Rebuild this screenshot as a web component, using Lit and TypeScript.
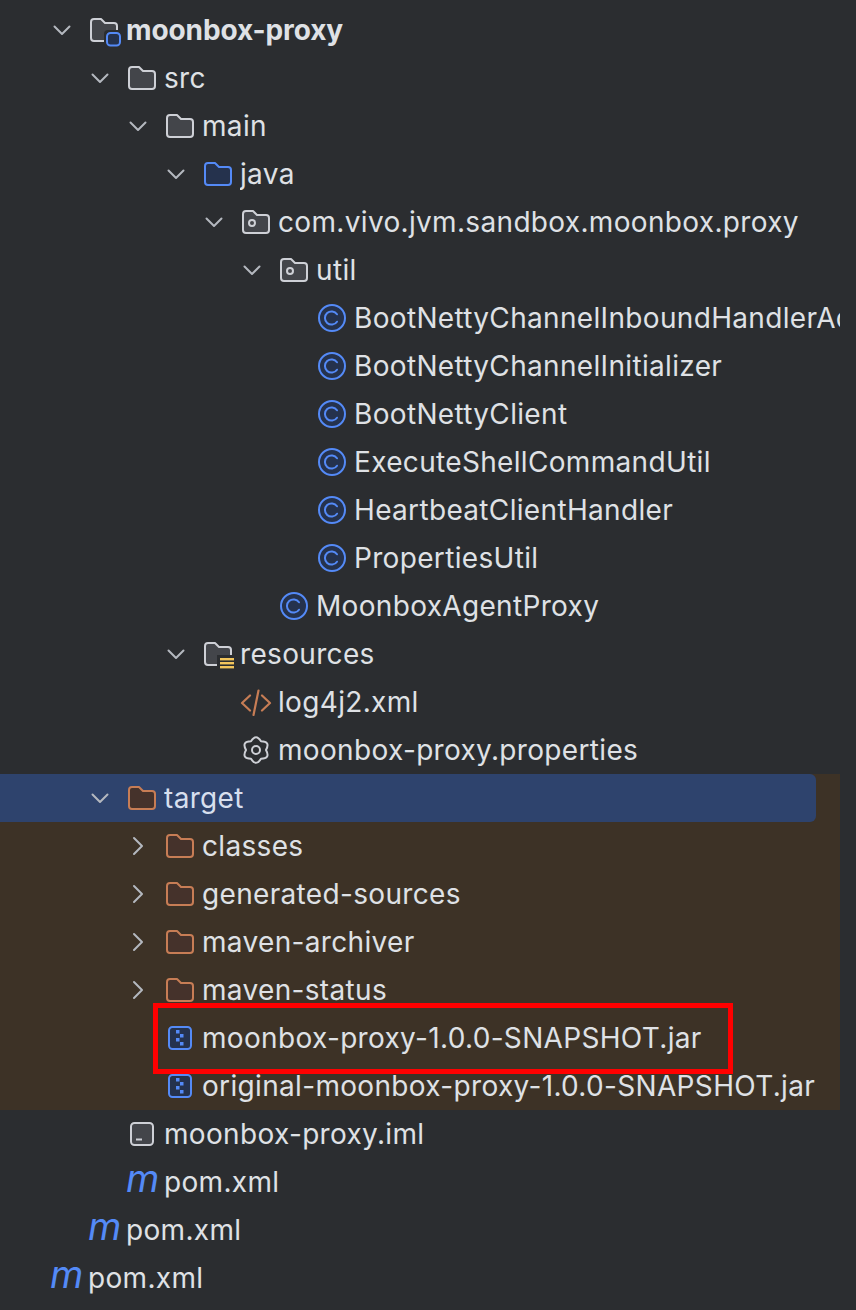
import { LitElement, html, css, svg, nothing } from "lit";
import { customElement } from "lit/decorators.js";

type Exp = "open" | "closed" | "";
interface Row { d: number; t: string; i: string; x: Exp; bold?: boolean; sel?: boolean; boxed?: boolean; }

const F = "M1 6a3 3 0 0 1 3-3h7l4 4h9a3 3 0 0 1 3 3v12a3 3 0 0 1-3 3H4a3 3 0 0 1-3-3z";
const folder = (fill: string, stroke: string, extra: unknown = nothing) => html`<svg viewBox="0 0 28 28" width="28" height="28"><path d=${F} fill=${fill} stroke=${stroke} stroke-width="2" stroke-linejoin="round"/>${extra}</svg>`;

const ICONS: Record<string, () => unknown> = {
  folder: () => folder("#43454a", "#ced0d6"),
  java: () => folder("#25324d", "#548af7"),
  target: () => folder("#45322b", "#c77d55"),
  pkg: () => folder("#43454a", "#ced0d6", svg`<circle cx="10" cy="15" r="3" fill="none" stroke="#ced0d6" stroke-width="2"/>`),
  module: () => folder("#43454a", "#ced0d6", svg`<rect x="14" y="14" width="18" height="18" rx="4" fill="#2b2d30"/><rect x="17" y="17" width="13" height="12.5" rx="3.5" fill="#25324d" stroke="#548af7" stroke-width="2"/>`),
  res: () => folder("#43454a", "#ced0d6", svg`<rect x="13" y="15" width="19" height="15" fill="#2b2d30"/><g fill="#f2c55c"><rect x="16" y="18" width="14" height="2.4"/><rect x="16" y="22" width="14" height="2.4"/><rect x="16" y="26" width="14" height="2.4"/></g>`),
  cls: () => html`<svg viewBox="0 0 28 28" width="28" height="28"><circle cx="14" cy="14" r="13" fill="#25324d" stroke="#548af7" stroke-width="2"/><path d="M19 10.3a6.6 6.6 0 1 0 0 7.4" fill="none" stroke="#548af7" stroke-width="2" stroke-linecap="round"/></svg>`,
  xml: () => html`<svg viewBox="0 0 32 28" width="32" height="28" class="wide"><path d="M10 7.500 2 15l8 7.500M22 7.500 30 15l-8 7.500M18.500 2.500 13.500 27" fill="none" stroke="#c77d55" stroke-width="2.200" stroke-linecap="round" stroke-linejoin="round"/></svg>`,
  gear: () => html`<svg viewBox="0 0 28 28" width="28" height="28"><path d="M9 5.340Q14-3 19 5.340 28.700 5.500 24 14 28.700 22.500 19 22.660 14 31 9 22.660-.7 22.500 4 14-.7 5.500 9 5.340z" fill="none" stroke="#ced0d6" stroke-width="2" stroke-linejoin="round"/><circle cx="14" cy="14" r="4" fill="none" stroke="#ced0d6" stroke-width="2"/></svg>`,
  jar: () => html`<svg viewBox="0 0 28 28" width="28" height="28"><rect x="3" y="3" width="22" height="22" rx="3.500" fill="#25324d" stroke="#548af7" stroke-width="2"/><g fill="#548af7"><rect x="10" y="6" width="3.500" height="3.500"/><rect x="14" y="10" width="3.500" height="3.500"/><rect x="10" y="14" width="3.500" height="3.500"/><rect x="14" y="18" width="3.500" height="3.500"/></g></svg>`,
  iml: () => html`<svg viewBox="0 0 28 28" width="28" height="28"><rect x="3" y="3" width="22" height="22" rx="3.500" fill="#43454a" stroke="#ced0d6" stroke-width="2"/><rect x="8" y="18.500" width="6" height="2" fill="#ced0d6"/></svg>`,
  m: () => html`<span class="m">m</span>`,
};

const ROWS: Row[] = [
  { d: 1, t: "moonbox-proxy", i: "module", x: "open", bold: true },
  { d: 2, t: "src", i: "folder", x: "open" },
  { d: 3, t: "main", i: "folder", x: "open" },
  { d: 4, t: "java", i: "java", x: "open" },
  { d: 5, t: "com.vivo.jvm.sandbox.moonbox.proxy", i: "pkg", x: "open" },
  { d: 6, t: "util", i: "pkg", x: "open" },
  { d: 7, t: "BootNettyChannelInboundHandlerAdapter", i: "cls", x: "" },
  { d: 7, t: "BootNettyChannelInitializer", i: "cls", x: "" },
  { d: 7, t: "BootNettyClient", i: "cls", x: "" },
  { d: 7, t: "ExecuteShellCommandUtil", i: "cls", x: "" },
  { d: 7, t: "HeartbeatClientHandler", i: "cls", x: "" },
  { d: 7, t: "PropertiesUtil", i: "cls", x: "" },
  { d: 6, t: "MoonboxAgentProxy", i: "cls", x: "" },
  { d: 4, t: "resources", i: "res", x: "open" },
  { d: 5, t: "log4j2.xml", i: "xml", x: "" },
  { d: 5, t: "moonbox-proxy.properties", i: "gear", x: "" },
];
const EXCLUDED: Row[] = [
  { d: 2, t: "target", i: "target", x: "open", sel: true },
  { d: 3, t: "classes", i: "target", x: "closed" },
  { d: 3, t: "generated-sources", i: "target", x: "closed" },
  { d: 3, t: "maven-archiver", i: "target", x: "closed" },
  { d: 3, t: "maven-status", i: "target", x: "closed" },
  { d: 3, t: "moonbox-proxy-1.0.0-SNAPSHOT.jar", i: "jar", x: "", boxed: true },
  { d: 3, t: "original-moonbox-proxy-1.0.0-SNAPSHOT.jar", i: "jar", x: "" },
];
const TAIL: Row[] = [
  { d: 2, t: "moonbox-proxy.iml", i: "iml", x: "" },
  { d: 2, t: "pom.xml", i: "m", x: "" },
  { d: 1, t: "pom.xml", i: "m", x: "" },
  { d: 0, t: "pom.xml", i: "m", x: "" },
];

@customElement("app-root")
export class AppRoot extends LitElement {
  static styles = css`
    :host { display: block; width: 856px; height: 1310px; background: #2b2d30; overflow: hidden;
      font-family: Inter, "Liberation Sans", sans-serif; }
    .tree { display: flex; flex-direction: column; padding-top: 6px; width: 840px; }
    .excluded { background: #3d3226; display: flex; flex-direction: column; }
    .row { position: relative; box-sizing: border-box; height: 48px; display: flex; align-items: center; flex: none; }
    .row.sel { width: 816px; background: #2e436d; border-radius: 0 6px 6px 0; }
    .chev { width: 28px; margin-left: -28px; height: 28px; flex: none; display: flex; justify-content: center; }
    .chev svg { display: block; margin-left: -28px; }
    .ico { width: 28px; height: 28px; flex: none; margin-right: 8px; display: flex; position: relative; }
    .ico svg { overflow: visible; display: block; flex: none; }
    .ico svg.wide { margin-left: -2px; }
    .m { display: block; font-style: italic; font-size: 38px; line-height: 28px; color: #548af7; margin-left: -2px; margin-top: -4px; }
    .name { font-size: 28px; letter-spacing: 0.33px; color: #dfe1e5; white-space: nowrap; overflow: hidden; min-width: 0; line-height: 48px; }
    .bold { font-weight: 700; letter-spacing: -0.1px; }
    .sel .name { color: #d7dfee; }
    .box { position: absolute; left: 153px; top: -11px; width: 580px; height: 71px; box-sizing: border-box; border: 5px solid #f00; pointer-events: none; }
  `;

  private chevron(x: Exp) {
    if (x === "open") return html`<svg width="18" height="28" viewBox="0 0 18 28"><path d="M1.500 10.500 9 18l7.500-7.500" fill="none" stroke="#b4b8bf" stroke-width="2" stroke-linecap="round" stroke-linejoin="round"/></svg>`;
    if (x === "closed") return html`<svg width="18" height="28" viewBox="0 0 18 28"><path d="M5 6l8 8-8 8" fill="none" stroke="#b4b8bf" stroke-width="2" stroke-linecap="round" stroke-linejoin="round"/></svg>`;
    return nothing;
  }

  private row(r: Row) {
    const pad = 52 + 38 * r.d;
    return html`<div class="row ${r.sel ? "sel" : ""}" style="padding-left:${pad}px">
      <span class="chev">${this.chevron(r.x)}</span>
      <span class="ico">${ICONS[r.i]()}</span>
      <span class="name ${r.bold ? "bold" : ""}">${r.t}</span>
      ${r.boxed ? html`<div class="box"></div>` : nothing}
    </div>`;
  }

  render() {
    return html`<div class="tree">
      ${ROWS.map((r) => this.row(r))}
      <div class="excluded">${EXCLUDED.map((r) => this.row(r))}</div>
      ${TAIL.map((r) => this.row(r))}
    </div>`;
  }
}
